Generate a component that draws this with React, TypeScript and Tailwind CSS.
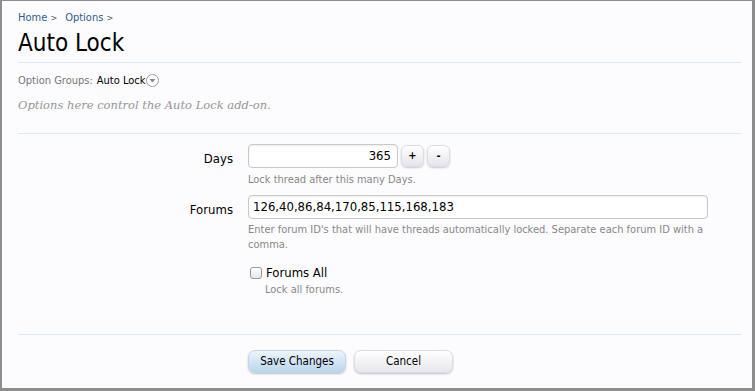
const sans = "font-['DejaVu_Sans_Condensed','DejaVu_Sans',sans-serif]";

function Row({ label, children }: { label?: string; children: React.ReactNode }) {
  return (
    <div className="flex">
      <div className="w-[246px] shrink-0 pt-[5px] pr-[15px] text-right text-[13px] text-black">{label}</div>
      <div className="flex-1">{children}</div>
    </div>
  );
}

export default function App() {
  return (
    <div className={`h-[391px] w-[755px] border-t border-r-[3px] border-b-[3px] border-l-2 border-[#8d8d8d] bg-[#fcfcff] ${sans}`}>
      <div className="pt-[9px] pr-[11px] pl-[16px]">
        <div className="flex gap-[8px] text-[11px] text-[#2b5d8d]">
          <span>
            Home <span className="text-[9px] text-[#555]">&gt;</span>
          </span>
          <span>
            Options <span className="text-[9px] text-[#555]">&gt;</span>
          </span>
        </div>
        <h1 className="mt-[2px] text-[24px] leading-[29px] text-black">Auto Lock</h1>
        <div className="mt-[4px] h-px bg-[#d6ebf7]" />

        <div className="mt-[10px] flex items-center text-[11px]">
          <span className="text-[#777]">Option Groups:</span>
          <span className="ml-[4px] text-black">Auto Lock</span>
          <svg width="13" height="13" viewBox="0 0 13 13" className="ml-[1px]">
            <circle cx="6.5" cy="6.5" r="6" fill="white" stroke="#9a9a9a" />
            <path d="M3.5 5 L9.5 5 L6.5 8.5 Z" fill="#8a8a8a" />
          </svg>
        </div>
        <p className="mt-[8px] font-['DejaVu_Serif',serif] text-[11.5px] italic text-[#969696]">
          Options here control the Auto Lock add-on.
        </p>
        <div className="mt-[19px] h-px bg-[#d6ebf7]" />
      </div>

      <div className="mt-[10px] flex flex-col">
        <Row label="Days">
          <div className="flex items-center gap-[3px]">
            <div className="h-[24px] w-[150px] rounded-[4px] border border-[#c9c9c9] bg-white px-[6px] text-right text-[13px] leading-[22px] text-black shadow-[inset_0_1px_2px_rgba(0,0,0,0.08)]">
              365
            </div>
            <button className="h-[22px] w-[23px] rounded-[6px] border border-[#dcdce4] bg-gradient-to-b from-white to-[#e4e4ec] text-[11px] font-bold text-black shadow-[0_1px_2px_rgba(0,0,0,0.2)]">
              +
            </button>
            <button className="h-[22px] w-[23px] rounded-[6px] border border-[#dcdce4] bg-gradient-to-b from-white to-[#e4e4ec] text-[11px] font-bold text-black shadow-[0_1px_2px_rgba(0,0,0,0.2)]">
              -
            </button>
          </div>
          <p className="mt-[4px] text-[11px] text-[#888]">Lock thread after this many Days.</p>
        </Row>

        <div className="mt-[6px]">
          <Row label="Forums">
            <div className="h-[24px] w-[460px] rounded-[4px] border border-[#c9c9c9] bg-white px-[4px] text-[13px] leading-[22px] text-black shadow-[inset_0_1px_2px_rgba(0,0,0,0.08)]">
              126,40,86,84,170,85,115,168,183
            </div>
            <p className="mt-[3px] w-[470px] text-[11px] leading-[15px] text-[#888]">
              Enter forum ID's that will have threads automatically locked. Separate each forum ID with a comma.
            </p>
          </Row>
        </div>

        <div className="mt-[11px]">
          <Row>
            <label className="ml-[2px] flex items-center gap-[4px] text-[13px] text-black">
              <span className="h-[12px] w-[12px] rounded-[3px] border border-[#999] bg-gradient-to-b from-white to-[#e6e6e6]" />
              Forums All
            </label>
            <p className="ml-[17px] text-[11px] text-[#888]">Lock all forums.</p>
          </Row>
        </div>
      </div>

      <div className="mt-[35px] mr-[11px] ml-[16px] h-px bg-[#d6ebf7]" />
      <div className="mt-[15px] flex gap-[8px] pl-[246px]">
        <button className="h-[23px] w-[98px] rounded-[7px] border border-[#c3d6e6] bg-gradient-to-b from-[#eef5fb] to-[#b8d6ee] text-[11.5px] text-black shadow-[0_1px_2px_rgba(0,0,0,0.25)]">
          Save Changes
        </button>
        <button className="h-[23px] w-[99px] rounded-[7px] border border-[#dcdce4] bg-gradient-to-b from-white to-[#e6e6ee] text-[11.5px] text-black shadow-[0_1px_2px_rgba(0,0,0,0.25)]">
          Cancel
        </button>
      </div>
    </div>
  );
}
